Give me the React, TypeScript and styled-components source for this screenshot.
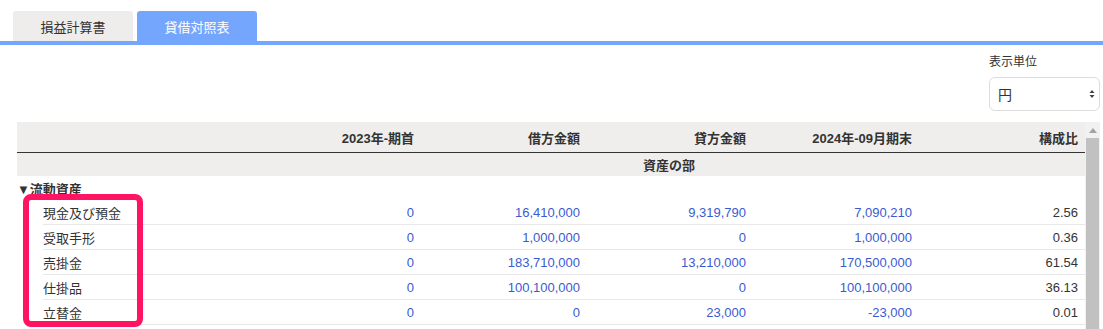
import React from "react";
import styled, { createGlobalStyle } from "styled-components";

const Global = createGlobalStyle`
  html, body { margin: 0; padding: 0; background: #fff; }
  body {
    font-family: "Liberation Sans", Arial, "Noto Sans CJK JP", sans-serif;
    color: #333;
    font-size: 13px;
    overflow: hidden;
  }
`;

const Page = styled.div`
  position: relative;
  width: 1103px;
  height: 329px;
  overflow: hidden;
`;

const TabBar = styled.div`
  display: flex;
  gap: 4px;
  padding: 11px 0 0 13px;
  border-bottom: 4px solid #75a6fd;
`;

const Tab = styled.div<{ $active?: boolean }>`
  width: 120px;
  height: 30px;
  display: flex;
  align-items: center;
  justify-content: center;
  border-radius: 3px 3px 0 0;
  font-size: 13px;
  background: ${(p) => (p.$active ? "#75a6fd" : "#eeedeb")};
  color: ${(p) => (p.$active ? "#fff" : "#333")};
`;

const Toolbar = styled.div`
  display: flex;
  justify-content: flex-end;
  padding: 10px 3px 0 0;
`;

const UnitGroup = styled.div`
  display: flex;
  flex-direction: column;
  width: 111px;
  gap: 8px;
`;

const UnitLabel = styled.div`
  font-size: 12px;
  line-height: 14px;
  color: #333;
`;

const Select = styled.div`
  height: 34px;
  box-sizing: border-box;
  border: 1px solid #dcdcdc;
  border-radius: 6px;
  display: flex;
  align-items: center;
  justify-content: space-between;
  padding: 0 4px 0 8px;
  font-size: 14px;
`;

const TableWrap = styled.div`
  display: flex;
  margin: 11px 3px 0 17px;
`;

const Table = styled.div`
  width: 1068px;
  display: flex;
  flex-direction: column;
`;

const GRID = "236px 167px 166px 166px 166px 166px";

const HeadRow = styled.div`
  display: grid;
  grid-template-columns: ${GRID};
  height: 30px;
  align-items: center;
  background: #efeeec;
  border-bottom: 1px solid #333;
  font-weight: bold;
`;

const SectionRow = styled.div`
  display: grid;
  grid-template-columns: ${GRID};
  height: 23px;
  align-items: center;
  background: #efeeec;
  font-weight: bold;
`;

const GroupRow = styled.div`
  height: 24px;
  display: flex;
  align-items: center;
  font-weight: bold;
`;

const DataRow = styled.div`
  display: grid;
  grid-template-columns: 210px 167px 166px 166px 166px 166px;
  margin-left: 26px;
  height: 24px;
  align-items: center;
  border-bottom: 1px solid #e8e8e8;
`;

const Cell = styled.div<{ $align?: "left" | "right" | "center"; $blue?: boolean }>`
  text-align: ${(p) => p.$align || "right"};
  padding-right: ${(p) => (p.$align === "right" || !p.$align ? "6px" : "0")};
  color: ${(p) => (p.$blue ? "#3a5bd0" : "#333")};
  white-space: nowrap;
`;

const ScrollTrack = styled.div`
  width: 15px;
  background: #f1f1f1;
  display: flex;
  flex-direction: column;
  align-items: center;
`;

const ScrollButton = styled.div`
  height: 16px;
  display: flex;
  align-items: center;
  justify-content: center;
`;

const ScrollThumb = styled.div`
  width: 13px;
  height: 300px;
  background: #c1c1c1;
`;

const Highlight = styled.div`
  position: absolute;
  left: 23px;
  top: 194px;
  width: 120px;
  height: 133px;
  box-sizing: border-box;
  border: 6px solid #ff1464;
  border-radius: 8px;
  pointer-events: none;
`;

const rows = [
  ["現金及び預金", "0", "16,410,000", "9,319,790", "7,090,210", "2.56"],
  ["受取手形", "0", "1,000,000", "0", "1,000,000", "0.36"],
  ["売掛金", "0", "183,710,000", "13,210,000", "170,500,000", "61.54"],
  ["仕掛品", "0", "100,100,000", "0", "100,100,000", "36.13"],
  ["立替金", "0", "0", "23,000", "-23,000", "0.01"],
];

export default function App() {
  return (
    <Page>
      <Global />
      <TabBar>
        <Tab>損益計算書</Tab>
        <Tab $active>貸借対照表</Tab>
      </TabBar>
      <Toolbar>
        <UnitGroup>
          <UnitLabel>表示単位</UnitLabel>
          <Select>
            <span>円</span>
            <svg width="6" height="10" viewBox="0 0 6 10">
              <path d="M3 1 L5.5 4 H0.5 Z" fill="#444" />
              <path d="M3 9 L5.5 6 H0.5 Z" fill="#444" />
            </svg>
          </Select>
        </UnitGroup>
      </Toolbar>
      <TableWrap>
        <Table>
          <HeadRow>
            <Cell />
            <Cell>2023年-期首</Cell>
            <Cell>借方金額</Cell>
            <Cell>貸方金額</Cell>
            <Cell>2024年-09月期末</Cell>
            <Cell>構成比</Cell>
          </HeadRow>
          <SectionRow>
            <Cell />
            <Cell />
            <Cell />
            <Cell $align="center">資産の部</Cell>
            <Cell />
            <Cell />
          </SectionRow>
          <GroupRow>▼流動資産</GroupRow>
          {rows.map((r) => (
            <DataRow key={r[0]}>
              <Cell $align="left">{r[0]}</Cell>
              <Cell $blue>{r[1]}</Cell>
              <Cell $blue>{r[2]}</Cell>
              <Cell $blue>{r[3]}</Cell>
              <Cell $blue>{r[4]}</Cell>
              <Cell>{r[5]}</Cell>
            </DataRow>
          ))}
        </Table>
        <ScrollTrack>
          <ScrollButton>
            <svg width="8" height="5" viewBox="0 0 8 5">
              <path d="M4 0 L8 5 H0 Z" fill="#a3a3a3" />
            </svg>
          </ScrollButton>
          <ScrollThumb />
        </ScrollTrack>
      </TableWrap>
      <Highlight />
    </Page>
  );
}
